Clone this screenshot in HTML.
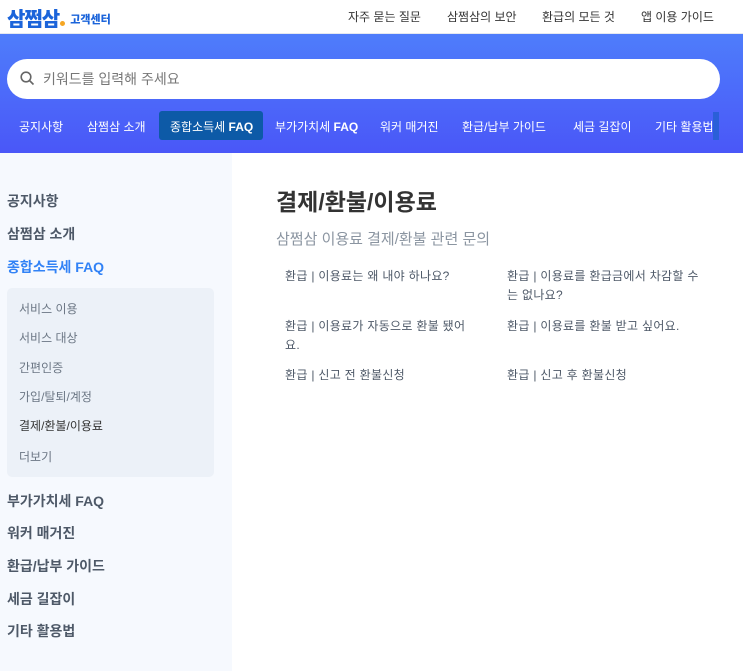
<!DOCTYPE html>
<html><head><meta charset="utf-8"><style>
*{margin:0;padding:0;box-sizing:border-box}
body{width:743px;height:671px;overflow:hidden;font-family:"Liberation Sans","Noto Sans CJK KR",sans-serif;background:#fff;position:relative}
.top{height:34px;position:relative;border-bottom:1px solid #e5e8f0}
.logo{position:absolute;left:7px;top:3px;font-size:20px;font-weight:900;color:#1b64da;letter-spacing:-1px}
.logo i{display:inline-block;width:5px;height:5px;border-radius:50%;background:#f5a623;margin-left:1px}
.logo span{font-size:11px;letter-spacing:0;margin-left:5px;vertical-align:3px}
.tnav{position:absolute;top:8px;font-size:12px;color:#333}
.hero{position:absolute;top:34px;left:0;width:743px;height:119px;background:linear-gradient(#4e7dfb,#4a57f8)}
.search{position:absolute;left:7px;top:25px;width:713px;height:40px;background:#fff;border-radius:20px}
.search span{position:absolute;left:36px;top:10px;font-size:14px;color:#777}
.search svg{position:absolute;left:13px;top:12px}
.nav{position:absolute;top:84px;font-size:12px;color:#fff;white-space:nowrap}
.act{position:absolute;left:159px;top:77px;width:104px;height:29px;background:#0d5aa7;border-radius:3px}
.side{position:absolute;left:0;top:153px;width:232px;height:518px;background:#f6f9fe}
.s1{position:absolute;left:7px;font-size:14px;font-weight:bold;color:#4e5968}
.sub{position:absolute;left:7px;top:288px;width:207px;height:189px;background:#ecf1f8;border-radius:5px}
.s2{position:absolute;left:19px;font-size:12px;color:#6b7684}
h1{position:absolute;left:276px;top:183px;font-size:23px;color:#333;font-weight:bold}
.desc{position:absolute;left:276px;top:228px;font-size:15px;color:#8b95a1}
.q{position:absolute;font-size:12px;color:#4e5968;line-height:19px;white-space:nowrap;letter-spacing:0.3px}
</style></head><body>
<div class="top">
<div class="logo">삼쩜삼<i></i><span>고객센터</span></div>
<div class="tnav" style="left:348px">자주 묻는 질문</div>
<div class="tnav" style="left:447px">삼쩜삼의 보안</div>
<div class="tnav" style="left:542px">환급의 모든 것</div>
<div class="tnav" style="left:641px">앱 이용 가이드</div>
</div>
<div class="hero">
<div class="search"><svg width="15" height="15" viewBox="0 0 15 15"><circle cx="6" cy="6" r="4.8" fill="none" stroke="#666" stroke-width="1.6"/><path d="M9.5 9.5L13.5 13.5" stroke="#666" stroke-width="1.6"/></svg><span>키워드를 입력해 주세요</span></div>
<div class="act"></div>
<div class="nav" style="left:19px">공지사항</div>
<div class="nav" style="left:87px">삼쩜삼 소개</div>
<div class="nav" style="left:170px">종합소득세 <b>FAQ</b></div>
<div class="nav" style="left:275px">부가가치세 <b>FAQ</b></div>
<div class="nav" style="left:380px">워커 매거진</div>
<div class="nav" style="left:462px">환급/납부 가이드</div>
<div class="nav" style="left:573px">세금 길잡이</div>
<div class="nav" style="left:655px">기타 활용법</div>
<div style="position:absolute;left:713px;top:78px;width:6px;height:28px;background:#2a5fd8"></div>
</div>
<div class="side"></div>
<div class="s1" style="top:191px">공지사항</div>
<div class="s1" style="top:224px">삼쩜삼 소개</div>
<div class="s1" style="top:257px;color:#3182f6">종합소득세 FAQ</div>
<div class="sub"></div>
<div class="s2" style="top:300px">서비스 이용</div>
<div class="s2" style="top:329px">서비스 대상</div>
<div class="s2" style="top:359px">간편인증</div>
<div class="s2" style="top:388px">가입/탈퇴/계정</div>
<div class="s2" style="top:417px;color:#333">결제/환불/이용료</div>
<div class="s2" style="top:448px">더보기</div>
<div class="s1" style="top:491px">부가가치세 FAQ</div>
<div class="s1" style="top:523px">워커 매거진</div>
<div class="s1" style="top:556px">환급/납부 가이드</div>
<div class="s1" style="top:589px">세금 길잡이</div>
<div class="s1" style="top:621px">기타 활용법</div>
<h1>결제/환불/이용료</h1>
<div class="desc">삼쩜삼 이용료 결제/환불 관련 문의</div>
<div class="q" style="left:285px;top:267px">환급 | 이용료는 왜 내야 하나요?</div>
<div class="q" style="left:507px;top:267px">환급 | 이용료를 환급금에서 차감할 수<br>는 없나요?</div>
<div class="q" style="left:285px;top:317px">환급 | 이용료가 자동으로 환불 됐어<br>요.</div>
<div class="q" style="left:507px;top:317px">환급 | 이용료를 환불 받고 싶어요.</div>
<div class="q" style="left:285px;top:366px">환급 | 신고 전 환불신청</div>
<div class="q" style="left:507px;top:366px">환급 | 신고 후 환불신청</div>
</body></html>
